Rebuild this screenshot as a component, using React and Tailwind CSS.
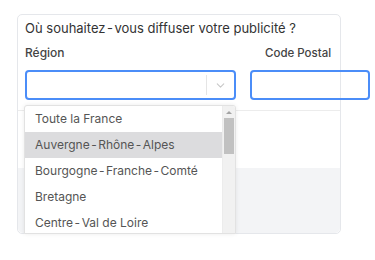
import { FiChevronDown } from "react-icons/fi";

const regions = [
  "Toute la France",
  "Auvergne-Rhône-Alpes",
  "Bourgogne-Franche-Comté",
  "Bretagne",
  "Centre-Val de Loire",
];

// les tirets sont rendus un peu espacés
function Spaced({ text }) {
  const parts = text.split("-");
  return (
    <>
      {parts.map((p, i) => (
        <span key={i}>
          {i > 0 && <span className="mx-[1.5px]">-</span>}
          {p}
        </span>
      ))}
    </>
  );
}

export default function App() {
  return (
    <div className="w-[375px] h-[260px] bg-white pt-[14px] pl-[17px] font-['Inter',sans-serif]">
      <div className="relative w-[324px] h-[220px] border border-[#e5e7eb] rounded-[5px] bg-white flex flex-col">
        {/* En-tête + champs */}
        <div className="h-[96px] border-b border-[#ececec] px-[7px]">
          <p className="text-[13px] leading-[24px] text-[#333] mt-[1px]">
            <Spaced text="Où souhaitez-vous diffuser votre publicité ?" />
          </p>
          <div className="flex mt-[3px]">
            <div className="flex flex-col">
              <span className="text-[12px] leading-[20px] text-[#444] font-medium">Région</span>
              <div className="mt-[7px] w-[211px] h-[30px] border-2 border-[#4b8df8] rounded-[4px] flex items-center justify-end">
                <div className="w-px h-[20px] bg-[#e5e5e5]" />
                <div className="w-[27px] flex justify-center text-[#c8c8c8]">
                  <FiChevronDown size={13} />
                </div>
              </div>
            </div>
            <div className="flex flex-col ml-[14px]">
              <span className="text-[11.5px] leading-[20px] text-[#444] font-medium pl-[15px]">Code Postal</span>
              <div className="mt-[7px] w-[120px] h-[30px] border-2 border-[#4b8df8] rounded-[4px]" />
            </div>
          </div>
        </div>
        <div className="h-[57px] bg-white" />
        <div className="flex-1 bg-[#f3f4f6] rounded-b-[5px]" />

        {/* Liste déroulante */}
        <div className="absolute left-[6px] top-[90px] w-[212px] h-[129px] bg-white border border-[#e2e2e2] rounded-t-[3px] shadow-[0_0_4px_rgba(0,0,0,0.08)] flex overflow-hidden">
          <div className="flex-1 flex flex-col">
            {regions.map((r, i) => (
              <div
                key={r}
                className={`h-[26px] shrink-0 flex items-center pl-[10px] text-[12px] text-[#555] ${i === 1 ? "bg-[#dcdcde]" : ""}`}
              >
                <Spaced text={r} />
              </div>
            ))}
          </div>
          <div className="w-[13px] bg-[#f1f1f1] border-l border-[#ececec] flex flex-col items-center">
            <div className="h-[12px] flex items-center justify-center">
              <div className="w-0 h-0 border-l-[3px] border-r-[3px] border-b-[3px] border-l-transparent border-r-transparent border-b-[#a3a3a3]" />
            </div>
            <div className="w-[10px] h-[36px] bg-[#c1c1c1]" />
          </div>
        </div>
      </div>
    </div>
  );
}
